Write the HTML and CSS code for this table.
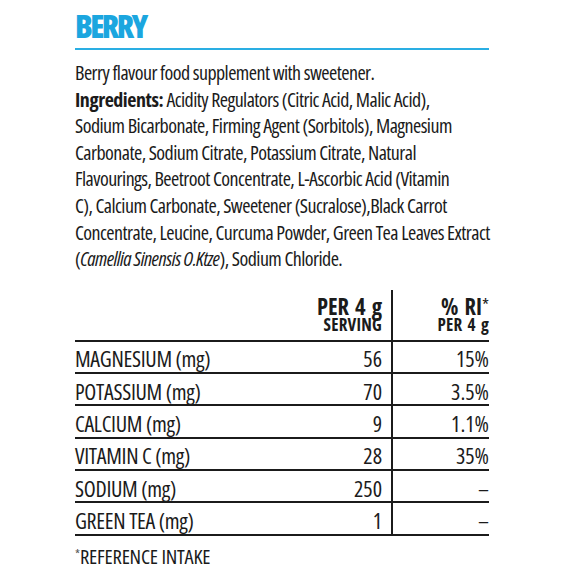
FILE: index.html
```html
<!DOCTYPE html>
<html lang="en">
<head>
<meta charset="utf-8">
<title>Berry</title>
<link rel="stylesheet" href="styles.css">
</head>
<body>
<main class="sheet">
  <h1 class="title">BERRY</h1>
  <p class="desc">Berry flavour food supplement with sweetener.<br><b class="strong">Ingredients:</b> Acidity Regulators (Citric Acid, Malic Acid),<br>Sodium Bicarbonate, Firming Agent (Sorbitols), Magnesium<br>Carbonate, Sodium Citrate, Potassium Citrate, Natural<br>Flavourings, Beetroot Concentrate, L-Ascorbic Acid (Vitamin<br>C), Calcium Carbonate, Sweetener (Sucralose),Black Carrot<br>Concentrate, Leucine, Curcuma Powder, Green Tea Leaves Extract<br>(<i>Camellia Sinensis O.Ktze</i>), Sodium Chloride.</p>
  <div class="table">
    <div class="row head">
      <div class="cell label"></div>
      <div class="cell num hcell"><span class="h1">PER 4 g</span><span class="h2">SERVING</span></div>
      <div class="cell ri hcell"><span class="h1">% RI<span class="ast">*</span></span><span class="h2">PER 4 g</span></div>
    </div>
    <div class="row"><div class="cell label">MAGNESIUM (mg)</div><div class="cell num">56</div><div class="cell ri">15%</div></div>
    <div class="row"><div class="cell label">POTASSIUM (mg)</div><div class="cell num">70</div><div class="cell ri">3.5%</div></div>
    <div class="row"><div class="cell label">CALCIUM (mg)</div><div class="cell num">9</div><div class="cell ri">1.1%</div></div>
    <div class="row"><div class="cell label">VITAMIN C (mg)</div><div class="cell num">28</div><div class="cell ri">35%</div></div>
    <div class="row"><div class="cell label">SODIUM (mg)</div><div class="cell num">250</div><div class="cell ri">–</div></div>
    <div class="row"><div class="cell label">GREEN TEA (mg)</div><div class="cell num">1</div><div class="cell ri">–</div></div>
  </div>
  <p class="foot"><span class="fast">*</span>REFERENCE INTAKE</p>
</main>
</body>
</html>
```
FILE: styles.css
```css
html, body {
  margin: 0;
  padding: 0;
  background: #ffffff;
}
body {
  font-family: "Open Sans", "Roboto Condensed", "DejaVu Sans Condensed", sans-serif;
  font-stretch: 75%;
  color: #1b1b1b;
}
.sheet {
  width: 414px;
  margin-left: 75px;
  padding-top: 10px;
}
.title {
  margin: 0;
  font-size: 32px;
  line-height: 32px;
  font-weight: 800;
  letter-spacing: -2.6px;
  color: #1ba6df;
  padding-bottom: 6px;
  border-bottom: 2px solid #2aaee3;
}
.desc {
  margin: 10px 0 0;
  font-size: 20px;
  line-height: 26.6px;
  letter-spacing: -0.55px;
  white-space: nowrap;
}
.strong {
  font-weight: 700;
  letter-spacing: -0.45px;
}
.table {
  margin-top: 17px;
}
.row {
  display: grid;
  grid-template-columns: 1fr 120px 98px;
  height: 32.33px;
  box-sizing: border-box;
  border-bottom: 2px solid #1b1b1b;
}
.row.head {
  height: 52px;
}
.cell {
  display: flex;
  align-items: flex-end;
  padding-bottom: 2.8px;
  font-size: 22px;
  line-height: 22px;
  letter-spacing: -0.3px;
}
.num {
  justify-content: flex-end;
  padding-right: 9px;
  letter-spacing: 0;
}
.ri {
  justify-content: flex-end;
  border-left: 2px solid #1b1b1b;
  letter-spacing: 0;
}
.hcell {
  flex-direction: column;
  align-items: flex-end;
  justify-content: flex-end;
  padding-bottom: 5.6px;
  font-weight: 700;
}
.h1 {
  font-size: 22.5px;
  line-height: 22px;
  letter-spacing: 0;
  word-spacing: 2px;
}
.h2 {
  font-size: 17px;
  line-height: 18px;
  margin-top: -2px;
  letter-spacing: 0.2px;
  word-spacing: 2px;
}
.ast {
  font-weight: 400;
  font-size: 18px;
  vertical-align: 3px;
}
.foot {
  margin: 7px 0 0;
  font-size: 20.5px;
  line-height: 22px;
  letter-spacing: -0.2px;
}
.fast {
  font-size: 13px;
  vertical-align: 5px;
  color: #555;
}
```
